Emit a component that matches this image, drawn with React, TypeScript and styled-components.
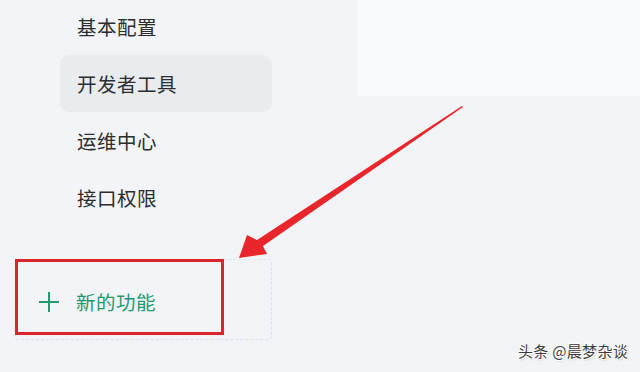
import React from "react";
import styled, { createGlobalStyle } from "styled-components";

const Global = createGlobalStyle`
  html, body { margin: 0; padding: 0; }
  body {
    width: 640px; height: 372px; overflow: hidden;
    background: #f2f4f7;
    font-family: "Noto Sans CJK SC", "Noto Sans", sans-serif;
  }
`;

const Page = styled.div`
  position: relative;
  width: 640px;
  height: 372px;
  display: flex;
  background: #f2f4f7;
  overflow: hidden;
`;

const Sidebar = styled.div`
  width: 357px;
  flex: none;
  display: flex;
  flex-direction: column;
  padding: 0 0 0 15px;
  margin-top: -2px;
  box-sizing: border-box;
`;

const Menu = styled.div`
  display: flex;
  flex-direction: column;
  padding-left: 45px;
  width: 257px;
  box-sizing: border-box;
`;

const MenuItem = styled.div<{ $active?: boolean }>`
  height: 57px;
  display: flex;
  align-items: center;
  padding-left: 17px;
  border-radius: 9px;
  font-size: 19.5px;
  color: #2b2d30;
  letter-spacing: 0.5px;
  background: ${(p) => (p.$active ? "#e9ebef" : "transparent")};
`;

const AddButton = styled.div`
  margin-top: 33px;
  height: 81px;
  width: 257px;
  box-sizing: border-box;
  border: 1px dashed #dfe2e7;
  border-radius: 4px;
  display: flex;
  align-items: center;
  gap: 16px;
  padding: 4px 0 0 22px;
  color: #239a6b;
  font-size: 19.5px;
  letter-spacing: 0.5px;
`;

const Main = styled.div`
  flex: 1;
  display: flex;
  flex-direction: column;
`;

const TopPanel = styled.div`
  height: 96px;
  background: #f9fafb;
`;

const Overlay = styled.svg`
  position: absolute;
  left: 0;
  top: 0;
  pointer-events: none;
`;

const Watermark = styled.div`
  position: absolute;
  right: 12px;
  bottom: 11px;
  font-size: 15px;
  color: #3c3c3c;
  font-family: "Noto Sans CJK SC", sans-serif;
  text-shadow: 1px 1px 0 #fff, -1px -1px 0 #fff, 1px -1px 0 #fff, -1px 1px 0 #fff, 1px 1px 2px #999;
  letter-spacing: 0.3px;
`;

const PlusIcon = () => (
  <svg width="22" height="22" viewBox="0 0 22 22">
    <path d="M11 1v20M1 11h20" stroke="#239a6b" strokeWidth="2" fill="none" />
  </svg>
);

export default function App() {
  return (
    <>
      <Global />
      <Page>
        <Sidebar>
          <Menu>
            <MenuItem>基本配置</MenuItem>
            <MenuItem $active>开发者工具</MenuItem>
            <MenuItem>运维中心</MenuItem>
            <MenuItem>接口权限</MenuItem>
          </Menu>
          <AddButton>
            <PlusIcon />
            <span>新的功能</span>
          </AddButton>
        </Sidebar>
        <Main>
          <TopPanel />
        </Main>
        <Overlay width="640" height="372" viewBox="0 0 640 372">
          <rect x="16.5" y="260.5" width="206" height="73" fill="none" stroke="#d9262b" strokeWidth="3" />
          <path
            d="M463 107 L263 246 L267 254 L239 258 L247 235 L257 240 L462 106 Z"
            fill="#e8262b"
          />
        </Overlay>
        <Watermark>头条 @晨梦杂谈</Watermark>
      </Page>
    </>
  );
}
